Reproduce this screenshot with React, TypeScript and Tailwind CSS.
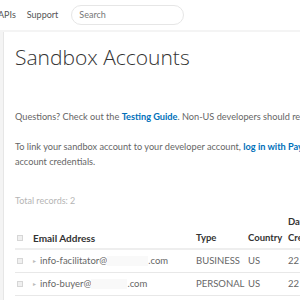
const rows = [
  { user: 'info-facilitator@', gap: 'w-[41px]', type: 'BUSINESS', country: 'US', date: '22' },
  { user: 'info-buyer@', gap: 'w-[36px]', type: 'PERSONAL', country: 'US', date: '22' },
]

function Box() {
  return <div className="w-[6px] h-[6px] border border-[#d6d6d6] bg-[#f0f0f0]" />
}

export default function App() {
  return (
    <div className="w-[300px] h-[300px] overflow-hidden bg-[#f4f4f4] font-['Lato',sans-serif] text-[#666]">
      {/* top nav */}
      <nav className="h-[30px] bg-white flex items-center text-[9px] text-[#555] whitespace-nowrap">
        <span className="ml-[-2px]">APIs</span>
        <span className="ml-[11px]">Support</span>
        <div className="ml-[13px] w-[113px] h-[20px] rounded-full border border-[#e6e6e6] flex items-center pl-[7px] text-[#777]">
          Search
        </div>
      </nav>

      {/* card */}
      <main className="mt-[2px] ml-[3px] w-[400px] h-[300px] bg-white border-l border-[#e6e6e6] pl-[11px] pt-[10px]">
        <h1 className="font-['Open_Sans',sans-serif] text-[21px] leading-[30px] font-light text-[#333] whitespace-nowrap">Sandbox Accounts</h1>

        <p className="mt-[37px] text-[9.2px] leading-[15px] whitespace-nowrap">
          Questions? Check out the <a className="text-[#0070ba] font-bold">Testing Guide</a>. Non-US developers should read about country-specific testing.
        </p>
        <p className="mt-[15px] text-[9.2px] leading-[15px] w-[290px]">
          <span className="whitespace-nowrap">To link your sandbox account to your developer account, <a className="text-[#0070ba] font-bold">log in with PayPal</a> using your</span>
          <br />
          account credentials.
        </p>

        <div className="mt-[24px] text-[9px] leading-[15px] text-[#b5b5b5]">Total records: 2</div>

        {/* table */}
        <div className="mt-[6px] text-[9.5px]">
          <div className="flex items-end border-b-2 border-[#eeeeee] pb-[2px] font-bold text-[#333] leading-[16px] whitespace-nowrap">
            <div className="w-[18px] pl-[2px] flex items-center h-[16px]"><Box /></div>
            <div className="w-[163px] text-[10px]">Email Address</div>
            <div className="w-[52px]">Type</div>
            <div className="w-[40px]">Country</div>
            <div className="w-[60px]">Date<br />Created</div>
          </div>
          {rows.map((r) => (
            <div key={r.user} className="flex items-center h-[23px] border-b border-[#e8e8e8] leading-[16px] whitespace-nowrap">
              <div className="w-[18px] pl-[2px] flex items-center"><Box /></div>
              <div className="w-[163px] flex items-center">
                <span className="text-[6px] text-[#bbb] w-[7px]">▸</span>
                <span>{r.user}</span>
                <span className={`${r.gap} h-[10px] bg-[#f9f9f9]`} />
                <span>.com</span>
              </div>
              <div className="w-[52px]">{r.type}</div>
              <div className="w-[40px]">{r.country}</div>
              <div className="w-[60px]">{r.date}</div>
            </div>
          ))}
        </div>
      </main>
    </div>
  )
}
